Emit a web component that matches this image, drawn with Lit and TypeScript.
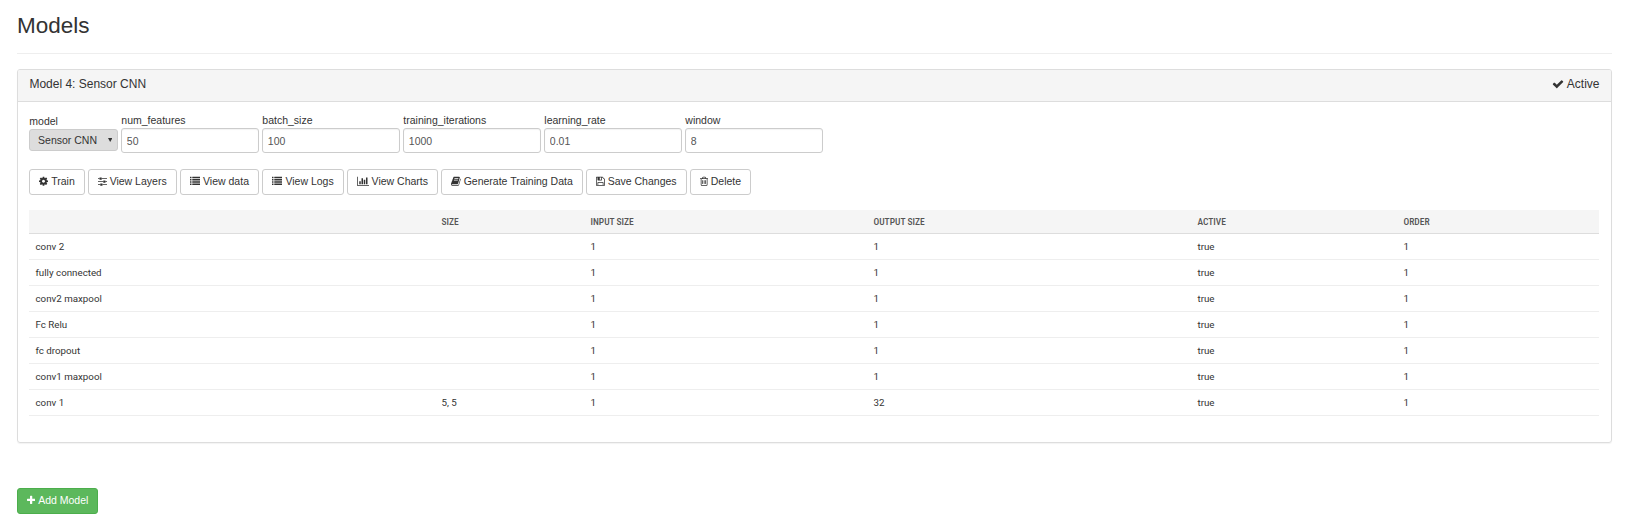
import { LitElement, html, css } from "lit";
import { customElement, property, state } from "lit/decorators.js";

type Glyph = { box: string; em: number; d: string };

const listRows = [128, 512, 896, 1280]
  .map(
    (y) =>
      `M32 ${y}h192q32 0 32 32v192q0 32-32 32h-192q-32 0-32-32v-192q0-32 32-32zM416 ${y}h1344q32 0 32 32v192q0 32-32 32h-1344q-32 0-32-32v-192q0-32 32-32z`
  )
  .join("");

const bar = (x: number) =>
  `M${x} 736v576q0 14-9 23t-23 9h-64q-14 0-23-9t-9-23v-576q0-14 9-23t23-9h64q14 0 23 9t9 23z`;

const glyphs: Record<string, Glyph> = {
  cog: {
    box: "128 0 1536 1792",
    em: 0.857,
    d: "M1152 896q0-106-75-181t-181-75-181 75-75 181 75 181 181 75 181-75 75-181zm512-109v222q0 12-8 23t-20 13l-185 28q-19 54-39 91 35 50 107 138 10 12 10 25t-9 23q-27 37-99 108t-94 71q-12 0-26-9l-138-108q-44 23-91 38-16 136-29 186-7 28-36 28h-222q-14 0-24.5-8.5t-11.5-21.5l-28-184q-49-16-90-37l-141 107q-10 9-25 9-14 0-25-11-126-114-165-168-7-10-7-23 0-12 8-23 15-21 51-66.5t54-70.5q-27-50-41-99l-183-27q-13-2-21-12.5t-8-23.5v-222q0-12 8-23t19-13l186-28q14-46 39-92-40-57-107-138-10-12-10-24 0-10 9-23 26-36 98.5-107.5t94.5-71.5q13 0 26 10l138 107q44-23 91-38 16-136 29-186 7-28 36-28h222q14 0 24.5 8.5t11.5 21.5l28 184q49 16 90 37l142-107q9-9 24-9 13 0 25 10 129 119 165 170 7 8 7 22 0 12-8 23-15 21-51 66.5t-54 70.5q26 50 41 98l183 28q13 2 21 12.5t8 23.5z",
  },
  sliders: {
    box: "128 0 1536 1792",
    em: 0.857,
    d: "M480 1408v128h-352v-128h352zm352-128q26 0 45 19t19 45v256q0 26-19 45t-45 19h-256q-26 0-45-19t-19-45v-256q0-26 19-45t45-19h256zm160-384v128h-864v-128h864zm-640-512v128h-224v-128h224zm1312 1024v128h-736v-128h736zm-960-1152q26 0 45 19t19 45v256q0 26-19 45t-45 19h-256q-26 0-45-19t-19-45v-256q0-26 19-45t45-19h256zm640 512q26 0 45 19t19 45v256q0 26-19 45t-45 19h-256q-26 0-45-19t-19-45v-256q0-26 19-45t45-19h256zm320 128v128h-224v-128h224zm0-512v128h-864v-128h864z",
  },
  list: { box: "0 0 1792 1792", em: 1, d: listRows },
  chart: {
    box: "0 0 2048 1792",
    em: 1.143,
    d: "M640 896v512h-256v-512h256zm384-512v1024h-256v-1024h256zm1024 1152v128h-2048v-1536h128v1408h1920zm-640-896v768h-256v-768h256zm384-384v1152h-256v-1152h256z",
  },
  book: {
    box: "64 0 1664 1792",
    em: 0.929,
    d: "M1703 478q40 57 18 129l-275 906q-19 64-76.5 107.5t-122.5 43.5h-923q-77 0-148.5-53.5t-99.5-131.5q-24-67-2-127 0-4 3-27t4-37q1-8-3-21.5t-3-19.5q2-11 8-21t16.5-23.5 16.5-23.5q23-38 45-91.5t30-91.5q3-10 .5-30t-.5-28q3-11 17-28t17-23q21-36 42-92t25-90q1-9-2.5-32t.5-28q4-13 22-30.5t22-22.5q19-26 42.5-84.5t27.5-96.5q1-8-3-25.5t-2-26.5q2-8 9-18t18-23 17-21q8-12 16.5-30.5t15-35 16-36 19.5-32 26.5-23.5 36-11.5 47.5 5.5l-1 3q38-9 51-9h761q74 0 114 56t18 130l-274 906q-36 119-71.5 153.5t-128.5 34.5h-869q-27 0-38 15-11 16-1 43 24 70 144 70h923q29 0 56-15.5t35-41.5l300-987q7-22 5-57 38 15 59 43zm-1064 2q-4 13 2 22.5t20 9.5h608q13 0 25.5-9.5t16.5-22.5l21-64q4-13-2-22.5t-20-9.5h-608q-13 0-25.5 9.5t-16.5 22.5zm-83 256q-4 13 2 22.5t20 9.5h608q13 0 25.5-9.5t16.5-22.5l21-64q4-13-2-22.5t-20-9.5h-608q-13 0-25.5 9.5t-16.5 22.5z",
  },
  floppy: {
    box: "128 0 1536 1792",
    em: 0.857,
    d: "M512 1536h768v-384h-768v384zm896 0h128v-896q0-14-10-38.5t-20-34.5l-281-281q-10-10-34-20t-39-10v416q0 40-28 68t-68 28h-576q-40 0-68-28t-28-68v-416h-128v1280h128v-416q0-40 28-68t68-28h832q40 0 68 28t28 68v416zm-384-928v-320q0-13-9.5-22.5t-22.5-9.5h-192q-13 0-22.5 9.5t-9.5 22.5v320q0 13 9.5 22.5t22.5 9.5h192q13 0 22.5-9.5t9.5-22.5zm640 32v928q0 40-28 68t-68 28h-1344q-40 0-68-28t-28-68v-1344q0-40 28-68t68-28h928q40 0 88 20t76 48l280 280q28 28 48 76t20 88z",
  },
  trash: {
    box: "192 0 1408 1792",
    em: 0.786,
    d:
      bar(704) +
      bar(960) +
      bar(1216) +
      "M1344 1460v-948h-896v948q0 22 7 40.5t14.5 27 10.5 8.5h832q3 0 10.5-8.5t14.5-27 7-40.5zm-672-1076h448l-48-117q-7-9-17-11h-317q-10 2-17 11zm928 32v64q0 14-9 23t-23 9h-96v948q0 83-47 143.5t-113 60.5h-832q-66 0-113-58.5t-47-141.5v-952h-96q-14 0-23-9t-9-23v-64q0-14 9-23t23-9h309l70-167q15-37 54-63t79-26h320q40 0 79 26t54 63l70 167h309q14 0 23 9t9 23z",
  },
  check: {
    box: "0 0 1792 1792",
    em: 1,
    d: "M1671 566q0 40-28 68l-724 724-136 136q-28 28-68 28t-68-28l-136-136-362-362q-28-28-28-68t28-68l136-136q28-28 68-28t68 28l294 295 656-657q28-28 68-28t68 28l136 136q28 28 28 68z",
  },
  plus: {
    box: "192 0 1408 1792",
    em: 0.786,
    d: "M1600 736v192q0 40-28 68t-68 28h-416v416q0 40-28 68t-68 28h-192q-40 0-68-28t-28-68v-416h-416q-40 0-68-28t-28-68v-192q0-40 28-68t68-28h416v-416q0-40 28-68t68-28h192q40 0 68 28t28 68v416h416q40 0 68 28t28 68z",
  },
};

@customElement("fa-icon")
class FaIcon extends LitElement {
  @property() name = "cog";
  static styles = css`
    :host {
      display: inline-block;
      line-height: 1;
    }
    .glyph {
      display: block;
      height: 1em;
      fill: currentColor;
    }
  `;
  render() {
    const g = glyphs[this.name];
    return html`<svg class="glyph" viewBox=${g.box} style="width:${g.em}em" aria-hidden="true">
      <path d=${g.d} fill-rule="evenodd"></path>
    </svg>`;
  }
}

const buttonStyles = css`
  .btn {
    box-sizing: border-box;
    display: inline-flex;
    align-items: center;
    gap: 2.92px;
    height: 26px;
    margin: 0;
    padding: 0 9px 1px;
    border: 1px solid #ccc;
    border-radius: 3px;
    background: #fff;
    color: #333;
    font: 10.5px/15px "Liberation Sans", Arial, sans-serif;
    white-space: nowrap;
  }
  .success {
    border-color: #4cae4c;
    background: #5cb85c;
    color: #fff;
  }
`;

interface Layer {
  name: string;
  size: string;
  input: number;
  output: number;
}

@customElement("model-layers")
class ModelLayers extends LitElement {
  @property({ attribute: false }) layers: Layer[] = [];
  static styles = css`
    :host {
      display: block;
    }
    .table {
      width: 100%;
      table-layout: fixed;
      border-collapse: separate;
      border-spacing: 0;
      font: 400 9.75px/13px Roboto, sans-serif;
      color: #333;
    }
    th,
    td {
      box-sizing: border-box;
      padding: 0 6px 0 6.2px;
      text-align: left;
      white-space: nowrap;
    }
    th {
      height: 24px;
      background: #f5f5f5;
      border-bottom: 1px solid #ddd;
      color: #555;
      font-family: "Roboto Condensed", Roboto, sans-serif;
      font-stretch: condensed;
      font-size: 9.5px;
      font-weight: 500;
    }
    td {
      height: 26px;
      border-bottom: 1px solid #eee;
    }
    .c-name { width: 406px; }
    .c-size { width: 149px; }
    .c-input { width: 283px; }
    .c-output { width: 324px; }
    .c-active { width: 206px; }
  `;
  render() {
    return html`<table class="table">
      <thead>
        <tr>
          <th class="c-name"></th>
          <th class="c-size">SIZE</th>
          <th class="c-input">INPUT SIZE</th>
          <th class="c-output">OUTPUT SIZE</th>
          <th class="c-active">ACTIVE</th>
          <th>ORDER</th>
        </tr>
      </thead>
      <tbody>
        ${this.layers.map(
          (l) => html`<tr>
            <td>${l.name}</td>
            <td>${l.size}</td>
            <td>${l.input}</td>
            <td>${l.output}</td>
            <td>true</td>
            <td>1</td>
          </tr>`
        )}
      </tbody>
    </table>`;
  }
}

@customElement("app-root")
class AppRoot extends LitElement {
  @state() private fields = [
    ["num_features", "50"],
    ["batch_size", "100"],
    ["training_iterations", "1000"],
    ["learning_rate", "0.01"],
    ["window", "8"],
  ];
  @state() private actions = [
    ["cog", "Train"],
    ["sliders", "View Layers"],
    ["list", "View data"],
    ["list", "View Logs"],
    ["chart", "View Charts"],
    ["book", "Generate Training Data"],
    ["floppy", "Save Changes"],
    ["trash", "Delete"],
  ];
  @state() private layers: Layer[] = [
    { name: "conv 2", size: "", input: 1, output: 1 },
    { name: "fully connected", size: "", input: 1, output: 1 },
    { name: "conv2 maxpool", size: "", input: 1, output: 1 },
    { name: "Fc Relu", size: "", input: 1, output: 1 },
    { name: "fc dropout", size: "", input: 1, output: 1 },
    { name: "conv1 maxpool", size: "", input: 1, output: 1 },
    { name: "conv 1", size: "5, 5", input: 1, output: 32 },
  ];

  static styles = [
    buttonStyles,
    css`
      :host {
        display: block;
        box-sizing: border-box;
        height: 532px;
        overflow: hidden;
        padding: 0 17px;
        background: #fff;
        color: #333;
        font: 10.5px/15px "Liberation Sans", Arial, sans-serif;
      }
      .title {
        box-sizing: border-box;
        height: 54px;
        margin: 0 0 15px;
        padding-top: 13px;
        border-bottom: 1px solid #eee;
        font-size: 22.5px;
        font-weight: 400;
        line-height: 25px;
      }
      .panel {
        box-sizing: border-box;
        height: 374px;
        margin-bottom: 45px;
        border: 1px solid #ddd;
        border-radius: 3px;
        box-shadow: 0 1px 1px rgba(0, 0, 0, 0.05);
      }
      .heading {
        box-sizing: border-box;
        display: flex;
        justify-content: space-between;
        height: 32px;
        padding: 7px 11.5px 0 11.4px;
        border-bottom: 1px solid #ddd;
        border-radius: 2px 2px 0 0;
        background: #f5f5f5;
        font-size: 12px;
        line-height: 14px;
      }
      .status {
        display: flex;
        gap: 3.3px;
      }
      .status fa-icon {
        margin-top: 1px;
      }
      .body {
        padding: 11px 11.7px 0 11.3px;
      }
      .form {
        display: flex;
        gap: 3px;
        height: 41px;
        margin-bottom: 15px;
      }
      .field {
        display: flex;
        flex-direction: column;
        width: 138px;
      }
      .field.pick {
        width: 89px;
        padding-top: 1px;
      }
      .text {
        box-sizing: border-box;
        width: 100%;
        height: 25px;
        margin: 0;
        padding: 1px 4.5px 0;
        border: 1px solid #ccc;
        border-radius: 3px;
        background: #fff;
        box-shadow: inset 0 1px 1px rgba(0, 0, 0, 0.05);
        color: #555;
        font: inherit;
        outline: none;
      }
      .select {
        box-sizing: border-box;
        display: flex;
        align-items: center;
        justify-content: space-between;
        height: 22px;
        padding: 0 5px 0 7.8px;
        border: 1px solid #ccc;
        border-radius: 3px;
        background: #ddd;
      }
      .caret {
        width: 4.4px;
        height: 4px;
        fill: #333;
      }
      .actions {
        display: flex;
        gap: 3px;
        margin-bottom: 15px;
      }
    `,
  ];

  render() {
    return html`
      <h2 class="title">Models</h2>
      <section class="panel">
        <header class="heading">
          <span>Model 4: Sensor CNN</span>
          <span class="status"><fa-icon name="check"></fa-icon>Active</span>
        </header>
        <div class="body">
          <div class="form">
            <div class="field pick">
              <span>model</span>
              <div class="select" role="combobox" aria-expanded="false">
                <span>Sensor CNN</span>
                <svg class="caret" viewBox="0 0 4.4 4"><path d="M0 0h4.4L2.2 4z"></path></svg>
              </div>
            </div>
            ${this.fields.map(
              ([name, value]) => html`<label class="field">
                <span>${name}</span>
                <input class="text" .value=${value} />
              </label>`
            )}
          </div>
          <div class="actions">
            ${this.actions.map(
              ([icon, label]) => html`<button class="btn"><fa-icon name=${icon}></fa-icon>${label}</button>`
            )}
          </div>
          <model-layers .layers=${this.layers}></model-layers>
        </div>
      </section>
      <button class="btn success"><fa-icon name="plus"></fa-icon>Add Model</button>
    `;
  }
}
